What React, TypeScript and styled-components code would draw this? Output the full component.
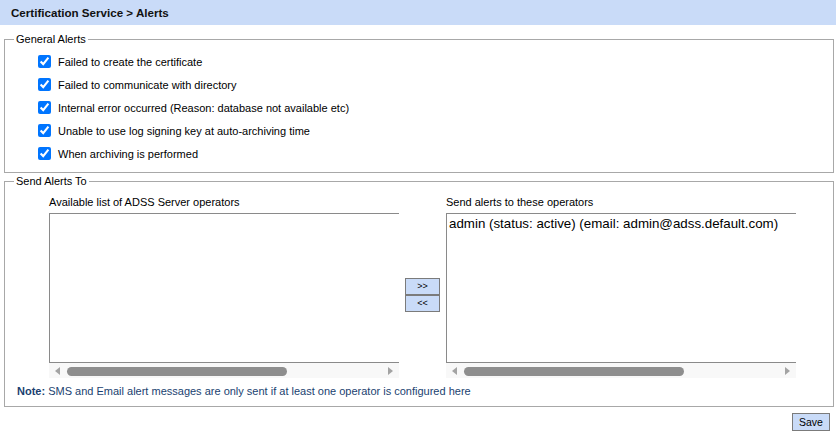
import React from "react";
import styled, { createGlobalStyle } from "styled-components";

const GlobalStyle = createGlobalStyle`
  html, body { margin: 0; padding: 0; background: #ffffff; }
  body { font-family: "Liberation Sans", Arial, sans-serif; font-size: 11px; color: #000; }
`;

const Page = styled.div`
  width: 837px;
  display: flex;
  flex-direction: column;
`;

const Header = styled.div`
  height: 25px;
  margin-right: 1px;
  background: #c9dbf8;
  padding-left: 11px;
  display: flex;
  align-items: center;
  font-weight: bold;
  font-size: 11.6px;
  color: #111;
`;

const Fieldset = styled.fieldset<{ $top: number }>`
  margin: ${(p) => p.$top}px 3px 0 4px;
  padding: 0;
  border: 1px solid #a8a8a8;
  min-width: 0;
`;

const Legend = styled.legend`
  margin-left: 9px;
  padding: 0 2px;
  font-size: 11px;
  line-height: 13px;
  color: #000;
`;

const AlertList = styled.div`
  padding: 4px 0 7px 33px;
  display: flex;
  flex-direction: column;
`;

const CheckRow = styled.label`
  height: 23px;
  display: flex;
  align-items: center;
  gap: 7px;
  font-size: 11px;
`;

const Check = styled.input`
  width: 13px;
  height: 13px;
  margin: 0;
  accent-color: #0075ff;
`;

const SendBody = styled.div`
  padding: 7px 0 8px 12px;
  display: flex;
  flex-direction: column;
`;

const ListsRow = styled.div`
  margin-left: 32px;
  display: flex;
  gap: 6px;
`;

const ListColumn = styled.div`
  width: 350px;
  display: flex;
  flex-direction: column;
`;

const ListLabel = styled.div`
  line-height: 14px;
  margin-bottom: 4px;
  font-size: 11px;
`;

const ListBox = styled.div`
  border: 1px solid #8a8a8a;
  border-right: none;
  overflow: hidden;
  background: #fff;
  padding: 2px 0 0 2px;
  box-sizing: content-box;
  height: 146px;
`;

const Option = styled.div`
  font-family: "Liberation Sans", Arial, sans-serif;
  font-size: 13.33px;
  line-height: 16px;
  white-space: nowrap;
  color: #000;
`;

const ScrollTrack = styled.div`
  height: 15px;
  background: #f8f8f8;
  display: flex;
  align-items: center;
  padding: 0 6px;
  gap: 7px;
`;

const Arrow = styled.svg`
  width: 5px;
  height: 8px;
  flex: none;
`;

const ThumbArea = styled.div`
  flex: 1;
  display: flex;
  align-items: center;
`;

const Thumb = styled.div`
  height: 9px;
  border-radius: 5px;
  background: #8e8e8e;
  margin-top: 1px;
`;

const MoveColumn = styled.div`
  width: 35px;
  display: flex;
  flex-direction: column;
  justify-content: center;
  padding-top: 16px;
`;

const MoveButton = styled.button`
  width: 35px;
  height: 17px;
  margin: 0;
  padding: 0;
  border: 1px solid #7b7b7b;
  background: #c9dbf8;
  font-family: "Liberation Sans", Arial, sans-serif;
  font-size: 9px;
  color: #000;
  line-height: 15px;
`;

const Note = styled.div`
  margin-top: 6px;
  line-height: 14px;
  font-size: 11px;
  color: #1a3f70;
  b { font-weight: bold; }
`;

const Footer = styled.div`
  display: flex;
  justify-content: flex-end;
  padding: 6px 7px 0 0;
`;

const SaveButton = styled.button`
  width: 38px;
  height: 18px;
  margin: 0;
  padding: 0;
  border: 1px solid #7b7b7b;
  background: #c9dbf8;
  font-family: "Liberation Sans", Arial, sans-serif;
  font-size: 10.5px;
  color: #000;
`;

const ScrollBar: React.FC = () => (
  <ScrollTrack>
    <Arrow viewBox="0 0 5 8">
      <path d="M5 0 L0 4 L5 8 Z" fill="#a3a3a3" />
    </Arrow>
    <ThumbArea>
      <Thumb style={{ width: "70%" }} />
    </ThumbArea>
    <Arrow viewBox="0 0 5 8">
      <path d="M0 0 L5 4 L0 8 Z" fill="#a3a3a3" />
    </Arrow>
  </ScrollTrack>
);

const alerts = [
  "Failed to create the certificate",
  "Failed to communicate with directory",
  "Internal error occurred (Reason: database not available etc)",
  "Unable to use log signing key at auto-archiving time",
  "When archiving is performed",
];

export default function App() {
  return (
    <Page>
      <GlobalStyle />
      <Header>Certification Service &gt; Alerts</Header>
      <Fieldset $top={8}>
        <Legend>General Alerts</Legend>
        <AlertList>
          {alerts.map((a) => (
            <CheckRow key={a}>
              <Check type="checkbox" defaultChecked />
              {a}
            </CheckRow>
          ))}
        </AlertList>
      </Fieldset>
      <Fieldset $top={2}>
        <Legend>Send Alerts To</Legend>
        <SendBody>
          <ListsRow>
            <ListColumn>
              <ListLabel>Available list of ADSS Server operators</ListLabel>
              <ListBox />
              <ScrollBar />
            </ListColumn>
            <MoveColumn>
              <MoveButton>&gt;&gt;</MoveButton>
              <MoveButton>&lt;&lt;</MoveButton>
            </MoveColumn>
            <ListColumn>
              <ListLabel>Send alerts to these operators</ListLabel>
              <ListBox>
                <Option>admin (status: active) (email: admin@adss.default.com)</Option>
              </ListBox>
              <ScrollBar />
            </ListColumn>
          </ListsRow>
          <Note>
            <b>Note:</b> SMS and Email alert messages are only sent if at least one operator is configured here
          </Note>
        </SendBody>
      </Fieldset>
      <Footer>
        <SaveButton>Save</SaveButton>
      </Footer>
    </Page>
  );
}
